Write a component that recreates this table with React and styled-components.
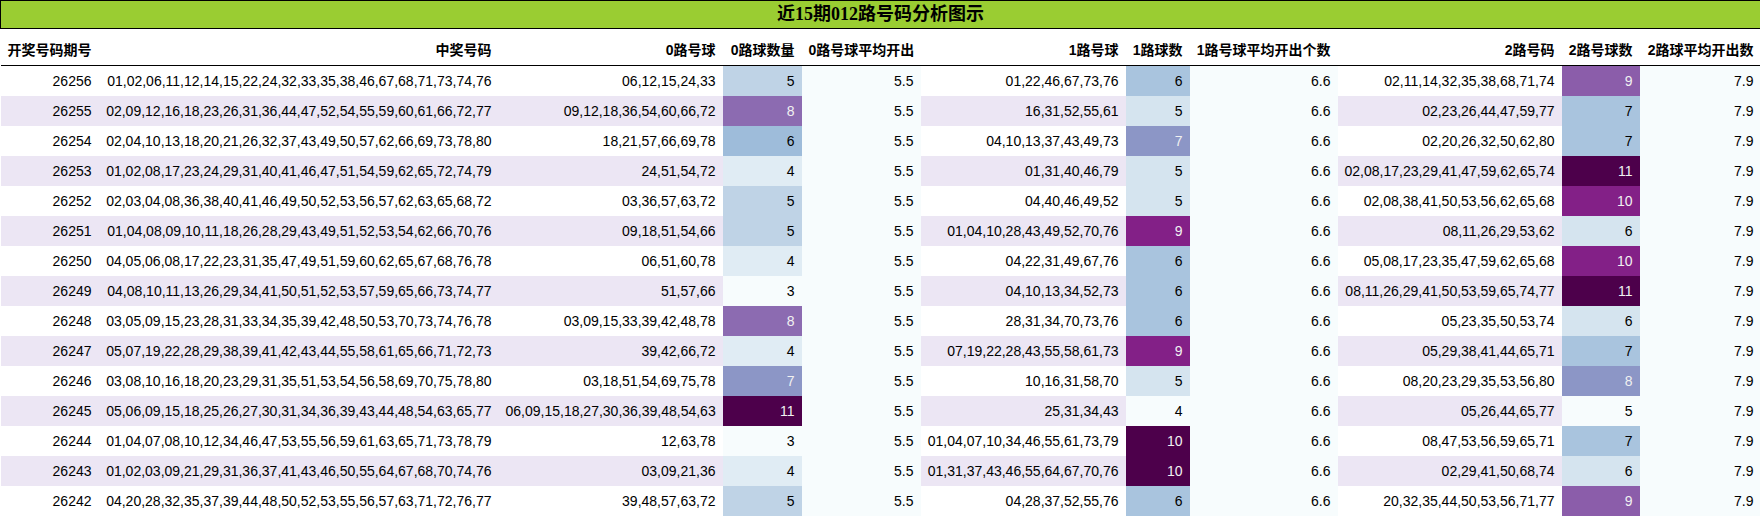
import React from "react";
import styled, { createGlobalStyle } from "styled-components";

const GlobalStyle = createGlobalStyle`
  html, body {
    margin: 0;
    padding: 0;
    background: #ffffff;
  }
`;

const Table = styled.table`
  border-collapse: collapse;
  table-layout: fixed;
  width: 1760px;
  font-family: "Liberation Sans", "Noto Sans CJK SC", sans-serif;
  font-size: 14px;
  color: #000;
`;

const TitleCell = styled.th`
  background: #9acd32;
  border: 1px solid #000;
  padding: 0;
  height: 27px;
  line-height: 27px;
  font-family: "Liberation Serif", "Noto Sans CJK SC", serif;
  font-size: 18px;
  font-weight: bold;
  text-align: center;
  color: #000;
`;

const HeadRow = styled.tr`
  background: #fff;
  border-bottom: 1px solid #000;
`;

const HeadCell = styled.th`
  padding: 11px 7px 4px 7px;
  line-height: 21px;
  font-weight: bold;
  text-align: right;
  white-space: nowrap;
  overflow: hidden;
`;

const Row = styled.tr`
  background: #fff;
  &:nth-child(even) {
    background: #ece6f4;
  }
`;

const Cell = styled.td`
  padding: 7px;
  line-height: 16px;
  text-align: right;
  white-space: nowrap;
  background: ${(p) => p.$bg || "transparent"};
  color: ${(p) => p.$fg || "#000"};
`;

// BuPu colormap stops
const BUPU = [
  "#f7fcfd", "#e0ecf4", "#bfd3e6", "#9ebcda", "#8c96c6",
  "#8c6bb1", "#88419d", "#810f7c", "#4d004b",
];

const hexToRgb = (h) => [1, 3, 5].map((i) => parseInt(h.slice(i, i + 2), 16));

const bupu = (t) => {
  const x = Math.max(0, Math.min(1, t)) * (BUPU.length - 1);
  const i = Math.min(Math.floor(x), BUPU.length - 2);
  const f = x - i;
  const a = hexToRgb(BUPU[i]);
  const b = hexToRgb(BUPU[i + 1]);
  return a.map((v, k) => Math.round(v + (b[k] - v) * f));
};

const luminance = (rgb) => {
  const lin = rgb.map((c) => {
    const s = c / 255;
    return s <= 0.03928 ? s / 12.92 : Math.pow((s + 0.055) / 1.055, 2.4);
  });
  return 0.2126 * lin[0] + 0.7152 * lin[1] + 0.0722 * lin[2];
};

const gradient = (v, min, max) => {
  const rgb = bupu(max === min ? 0 : (v - min) / (max - min));
  return {
    bg: `rgb(${rgb.join(",")})`,
    fg: luminance(rgb) < 0.408 ? "#f1f1f1" : "#000000",
  };
};

const draws = [
  ["26256", "01,02,06,11,12,14,15,22,24,32,33,35,38,46,67,68,71,73,74,76"],
  ["26255", "02,09,12,16,18,23,26,31,36,44,47,52,54,55,59,60,61,66,72,77"],
  ["26254", "02,04,10,13,18,20,21,26,32,37,43,49,50,57,62,66,69,73,78,80"],
  ["26253", "01,02,08,17,23,24,29,31,40,41,46,47,51,54,59,62,65,72,74,79"],
  ["26252", "02,03,04,08,36,38,40,41,46,49,50,52,53,56,57,62,63,65,68,72"],
  ["26251", "01,04,08,09,10,11,18,26,28,29,43,49,51,52,53,54,62,66,70,76"],
  ["26250", "04,05,06,08,17,22,23,31,35,47,49,51,59,60,62,65,67,68,76,78"],
  ["26249", "04,08,10,11,13,26,29,34,41,50,51,52,53,57,59,65,66,73,74,77"],
  ["26248", "03,05,09,15,23,28,31,33,34,35,39,42,48,50,53,70,73,74,76,78"],
  ["26247", "05,07,19,22,28,29,38,39,41,42,43,44,55,58,61,65,66,71,72,73"],
  ["26246", "03,08,10,16,18,20,23,29,31,35,51,53,54,56,58,69,70,75,78,80"],
  ["26245", "05,06,09,15,18,25,26,27,30,31,34,36,39,43,44,48,54,63,65,77"],
  ["26244", "01,04,07,08,10,12,34,46,47,53,55,56,59,61,63,65,71,73,78,79"],
  ["26243", "01,02,03,09,21,29,31,36,37,41,43,46,50,55,64,67,68,70,74,76"],
  ["26242", "04,20,28,32,35,37,39,44,48,50,52,53,55,56,57,63,71,72,76,77"],
];

const rows = draws.map(([issue, nums]) => {
  const list = nums.split(",");
  const road = (r) => list.filter((n) => Number(n) % 3 === r);
  return { issue, nums, roads: [road(0), road(1), road(2)] };
});

const stats = [0, 1, 2].map((r) => {
  const counts = rows.map((row) => row.roads[r].length);
  const avg = counts.reduce((a, b) => a + b, 0) / counts.length;
  return { min: Math.min(...counts), max: Math.max(...counts), avg: avg.toFixed(1) };
});

const headers = [
  "开奖号码期号", "中奖号码",
  "0路号球", "0路球数量", "0路号球平均开出",
  "1路号球", "1路球数", "1路号球平均开出个数",
  "2路号码", "2路号球数", "2路球平均开出数",
];

const widths = [98, 400, 224, 79, 119, 205, 64, 148, 224, 78, 121];

const avgColor = gradient(0, 0, 0);

export default function App() {
  return (
    <>
      <GlobalStyle />
      <Table>
        <colgroup>
          {widths.map((w, i) => (
            <col key={i} width={w} />
          ))}
        </colgroup>
        <thead>
          <tr>
            <TitleCell colSpan={11}>近15期012路号码分析图示</TitleCell>
          </tr>
          <HeadRow>
            {headers.map((h) => (
              <HeadCell key={h}>{h}</HeadCell>
            ))}
          </HeadRow>
        </thead>
        <tbody>
          {rows.map((row) => (
            <Row key={row.issue}>
              <Cell>{row.issue}</Cell>
              <Cell>{row.nums}</Cell>
              {row.roads.map((list, r) => {
                const c = gradient(list.length, stats[r].min, stats[r].max);
                return (
                  <React.Fragment key={r}>
                    <Cell>{list.join(",")}</Cell>
                    <Cell $bg={c.bg} $fg={c.fg}>{list.length}</Cell>
                    <Cell $bg={avgColor.bg} $fg={avgColor.fg}>{stats[r].avg}</Cell>
                  </React.Fragment>
                );
              })}
            </Row>
          ))}
        </tbody>
      </Table>
    </>
  );
}
